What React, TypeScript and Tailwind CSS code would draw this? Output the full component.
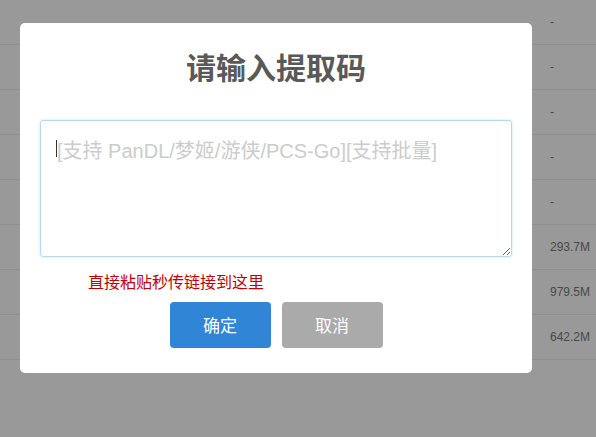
const sizes = ["-", "-", "-", "-", "-", "293.7M", "979.5M", "642.2M"];

export default function App() {
  return (
    <div className="relative min-h-screen bg-white" style={{ fontFamily: '"Liberation Sans", "Noto Sans CJK SC", sans-serif' }}>
      {/* table behind the dialog */}
      <div className="w-full">
        {sizes.map((s, i) => (
          <div key={i} className="flex h-[45px] items-center border-b border-[#eeeeee]">
            <div className="flex-1" />
            <div className="w-[46px] text-[12px] text-[#7a7a7a]">{s}</div>
          </div>
        ))}
      </div>

      {/* overlay + dialog */}
      <div className="fixed inset-0 bg-black/40 pl-[20px] pt-[23px]">
        <div className="flex h-[350px] w-[512px] flex-col items-center rounded-[5px] bg-white px-[20px] pt-[25px] pb-[25px]">
          <h2 className="h-[36px] text-[30px] leading-[36px] font-semibold text-[#595959]" style={{ fontFamily: '"Noto Sans CJK SC", sans-serif' }}>
            请输入提取码
          </h2>
          <div className="relative mt-[36px] w-full">
            <textarea
              placeholder="[支持 PanDL/梦姬/游侠/PCS-Go][支持批量]"
              className="block h-[137px] w-full rounded-[3px] border border-[#b4dbed] p-4 text-[20px] leading-[28px] text-[#545454] shadow-[0_0_3px_#c4e6f5] outline-none placeholder:text-[#cccccc]"
            />
            {/* caret */}
            <span className="pointer-events-none absolute left-[16px] top-[20px] h-[17px] w-px bg-[#333333]" />
          </div>
          <div className="mt-[12px] w-full pl-[48px] text-[16px] leading-[24px] text-[#c00000]" style={{ fontFamily: '"Noto Sans CJK SC", sans-serif' }}>
            直接粘贴秒传链接到这里
          </div>
          <div className="mt-[9px] flex gap-[11px]" style={{ fontFamily: '"Noto Sans CJK SC", sans-serif' }}>
            <button className="h-[46px] w-[101px] rounded-[4px] bg-[#3085d6] text-[17px] text-white">确定</button>
            <button className="h-[46px] w-[101px] rounded-[4px] bg-[#aaaaaa] text-[17px] text-white">取消</button>
          </div>
        </div>
      </div>
    </div>
  );
}
